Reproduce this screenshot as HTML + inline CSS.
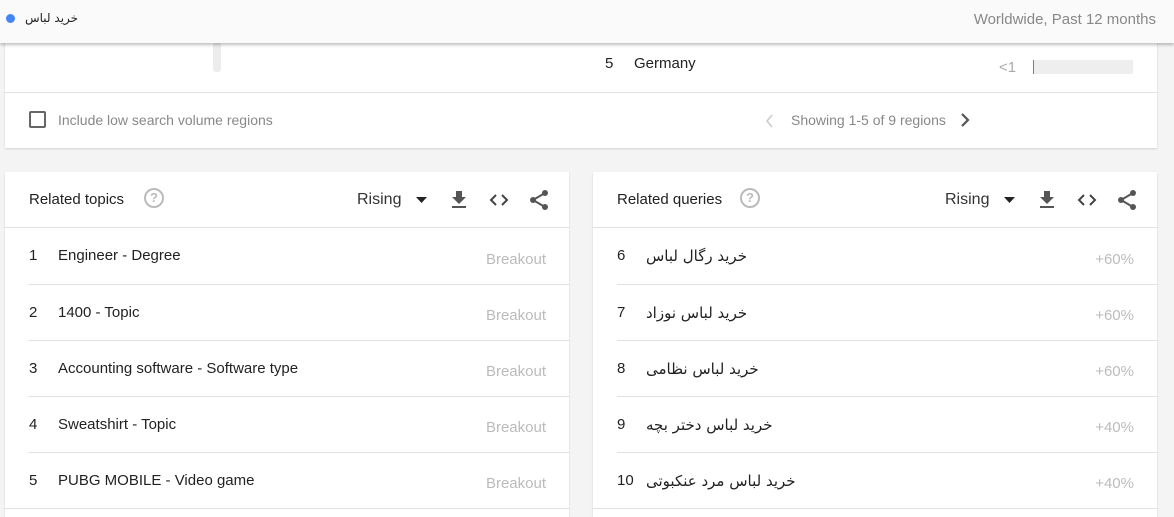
<!DOCTYPE html>
<html><head><meta charset="utf-8"><style>
*{margin:0;padding:0;box-sizing:border-box}
body{width:1174px;height:512px;overflow:hidden;background:#f4f4f4;font-family:"Liberation Sans","Noto Sans CJK SC",sans-serif;position:relative;color:#333}
.abs{position:absolute}
.hdr{left:0;top:0;width:1174px;height:43px;background:#fafafa;box-shadow:0 2px 3px rgba(0,0,0,.25);z-index:5}
.card{background:#fff;box-shadow:0 1px 2px rgba(0,0,0,.15)}
.fa{font-family:"DejaVu Sans","Liberation Sans",sans-serif;font-size:12px;color:#222}
.row{position:absolute;height:56px;border-top:1px solid #e0e0e0}
.num{position:absolute;left:0;top:19px;font-size:15px;color:#222}
.lbl{position:absolute;left:29px;top:19px;font-size:15px;color:#222}
.val{position:absolute;right:23px;top:22px;font-size:15px;color:#bbb}
.ttl{position:absolute;left:24px;top:19px;font-size:15px;color:#222}
.q{position:absolute;top:16px;width:20px;height:20px;border:2px solid #bbb;border-radius:50%;color:#bbb;font-size:13px;font-weight:bold;text-align:center;line-height:16px}
</style></head><body>
<div class="abs hdr">
 <div class="abs" style="left:6px;top:14px;width:9px;height:9px;border-radius:50%;background:#4285f4"></div>
 <div class="abs fa" style="left:25px;top:11px">خرید لباس</div>
 <div class="abs" style="right:18px;top:11px;font-size:15px;color:#888">Worldwide, Past 12 months</div>
</div>
<div class="abs card" style="left:5px;top:30px;width:1152px;height:118px">
 <div class="abs" style="left:208px;top:12px;width:8px;height:30px;background:#ececec;border-radius:3px"></div>
 <div class="abs" style="left:600px;top:25px;font-size:15px;color:#222">5</div>
 <div class="abs" style="left:629px;top:25px;font-size:15px;color:#222">Germany</div>
 <div class="abs" style="left:994px;top:29px;font-size:15px;color:#aaa">&lt;1</div>
 <div class="abs" style="left:1028px;top:30px;width:100px;height:14px;background:#eee;border-left:1px solid #4285f4"></div>
 <div class="abs" style="left:0;top:62px;width:1152px;border-top:1px solid #e0e0e0"></div>
 <div class="abs" style="left:24px;top:81px;width:17px;height:17px;border:2px solid #666;border-radius:2px"></div>
 <div class="abs" style="left:53px;top:82px;font-size:14px;color:#888">Include low search volume regions</div>
 <svg class="abs" style="left:760px;top:84px" width="10" height="14" viewBox="0 0 10 14"><path d="M7 1L2 7l5 6" stroke="#ccc" stroke-width="1.6" fill="none"/></svg>
 <div class="abs" style="left:786px;top:82px;font-size:14px;color:#888">Showing 1-5 of 9 regions</div>
 <svg class="abs" style="left:955px;top:83px" width="10" height="14" viewBox="0 0 10 14"><path d="M2 1l6 6-6 6" stroke="#555" stroke-width="2.2" fill="none"/></svg>
</div>

<div class="abs card" style="left:5px;top:172px;width:564px;height:345px">
 <div class="ttl">Related topics</div>
 <div class="q" style="left:139px">?</div>
 <div class="abs" style="left:352px;top:19px;font-size:16px;color:#333">Rising</div>
 <svg class="abs" style="left:411px;top:24px" width="12" height="8"><path d="M0 1h11L5.5 7z" fill="#222"/></svg>
 <svg class="abs" style="left:445px;top:18px" width="18" height="20" viewBox="0 0 18 20"><path d="M6 1h6v6h4L9 14 2 7h4z" fill="#555"/><rect x="2" y="16" width="14" height="2" fill="#555"/></svg>
 <svg class="abs" style="left:483px;top:20px" width="22" height="16" viewBox="0 0 22 16"><path d="M8 3L3 8l5 5M14 3l5 5-5 5" stroke="#444" stroke-width="2" fill="none"/></svg>
 <svg class="abs" style="left:523px;top:17px" width="22" height="22" viewBox="0 0 22 22"><circle cx="17" cy="4" r="3" fill="#555"/><circle cx="5" cy="11" r="3" fill="#555"/><circle cx="17" cy="18" r="3" fill="#555"/><path d="M17 4L5 11l12 7" stroke="#555" stroke-width="2" fill="none"/></svg>
 <div class="abs" style="left:0;top:55px;width:564px;border-top:1px solid #e0e0e0"></div>
 <div class="row" style="left:24px;top:56px;width:540px;border-top:none"><span class="num">1</span><span class="lbl">Engineer - Degree</span><span class="val" style="top:23px">Breakout</span></div>
 <div class="row" style="left:24px;top:112px;width:540px"><span class="num">2</span><span class="lbl">1400 - Topic</span><span class="val">Breakout</span></div>
 <div class="row" style="left:24px;top:168px;width:540px"><span class="num">3</span><span class="lbl">Accounting software - Software type</span><span class="val">Breakout</span></div>
 <div class="row" style="left:24px;top:224px;width:540px"><span class="num">4</span><span class="lbl">Sweatshirt - Topic</span><span class="val">Breakout</span></div>
 <div class="row" style="left:24px;top:280px;width:540px"><span class="num">5</span><span class="lbl">PUBG MOBILE - Video game</span><span class="val">Breakout</span></div>
 <div class="abs" style="left:0;top:336px;width:564px;border-top:1px solid #e0e0e0"></div>
</div>

<div class="abs card" style="left:593px;top:172px;width:564px;height:345px">
 <div class="ttl">Related queries</div>
 <div class="q" style="left:147px">?</div>
 <div class="abs" style="left:352px;top:19px;font-size:16px;color:#333">Rising</div>
 <svg class="abs" style="left:411px;top:24px" width="12" height="8"><path d="M0 1h11L5.5 7z" fill="#222"/></svg>
 <svg class="abs" style="left:445px;top:18px" width="18" height="20" viewBox="0 0 18 20"><path d="M6 1h6v6h4L9 14 2 7h4z" fill="#555"/><rect x="2" y="16" width="14" height="2" fill="#555"/></svg>
 <svg class="abs" style="left:483px;top:20px" width="22" height="16" viewBox="0 0 22 16"><path d="M8 3L3 8l5 5M14 3l5 5-5 5" stroke="#444" stroke-width="2" fill="none"/></svg>
 <svg class="abs" style="left:523px;top:17px" width="22" height="22" viewBox="0 0 22 22"><circle cx="17" cy="4" r="3" fill="#555"/><circle cx="5" cy="11" r="3" fill="#555"/><circle cx="17" cy="18" r="3" fill="#555"/><path d="M17 4L5 11l12 7" stroke="#555" stroke-width="2" fill="none"/></svg>
 <div class="abs" style="left:0;top:55px;width:564px;border-top:1px solid #e0e0e0"></div>
 <div class="row" style="left:24px;top:56px;width:540px;border-top:none"><span class="num">6</span><span class="lbl fa" style="top:19px">خرید رگال لباس</span><span class="val" style="top:23px">+60%</span></div>
 <div class="row" style="left:24px;top:112px;width:540px"><span class="num">7</span><span class="lbl fa" style="top:19px">خرید لباس نوزاد</span><span class="val">+60%</span></div>
 <div class="row" style="left:24px;top:168px;width:540px"><span class="num">8</span><span class="lbl fa" style="top:19px">خرید لباس نظامی</span><span class="val">+60%</span></div>
 <div class="row" style="left:24px;top:224px;width:540px"><span class="num">9</span><span class="lbl fa" style="top:19px">خرید لباس دختر بچه</span><span class="val">+40%</span></div>
 <div class="row" style="left:24px;top:280px;width:540px"><span class="num">10</span><span class="lbl fa" style="top:19px">خرید لباس مرد عنکبوتی</span><span class="val">+40%</span></div>
 <div class="abs" style="left:0;top:336px;width:564px;border-top:1px solid #e0e0e0"></div>
</div>
</body></html>
